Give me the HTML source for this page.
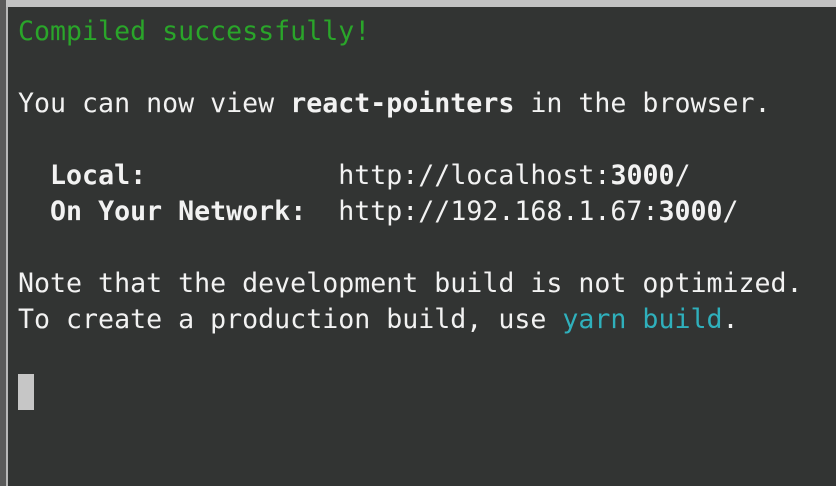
<!DOCTYPE html>
<html><head><meta charset="utf-8"><style>
html,body{margin:0;padding:0;}
body{width:836px;height:486px;background:#323433;position:relative;overflow:hidden;}
.top{position:absolute;left:0;top:0;width:836px;height:7px;background:#c2c2c2;}
.l1{position:absolute;left:0;top:0;width:6px;height:486px;background:#5a5a5a;}
.l2{position:absolute;left:6px;top:7px;width:2px;height:479px;background:#b8b8b8;}
pre{position:absolute;left:18px;top:14px;margin:0;font-family:"DejaVu Sans Mono","Liberation Mono",monospace;font-size:26.6px;line-height:36px;color:#f2f2f2;}
.g{color:#2aa52a}.c{color:#2fb0bc}b{font-weight:bold}
.cur{position:absolute;left:18px;top:374px;width:16px;height:36px;background:#c6c6c6;}
</style></head><body>
<div class="top"></div><div class="l1"></div><div class="l2"></div>
<pre><span class="g">Compiled successfully!</span>

You can now view <b>react-pointers</b> in the browser.

  <b>Local:</b>            http://localhost:<b>3000</b>/
  <b>On Your Network:</b>  http://192.168.1.67:<b>3000</b>/

Note that the development build is not optimized.
To create a production build, use <span class="c">yarn build</span>.
</pre>
<div class="cur"></div>
</body></html>
